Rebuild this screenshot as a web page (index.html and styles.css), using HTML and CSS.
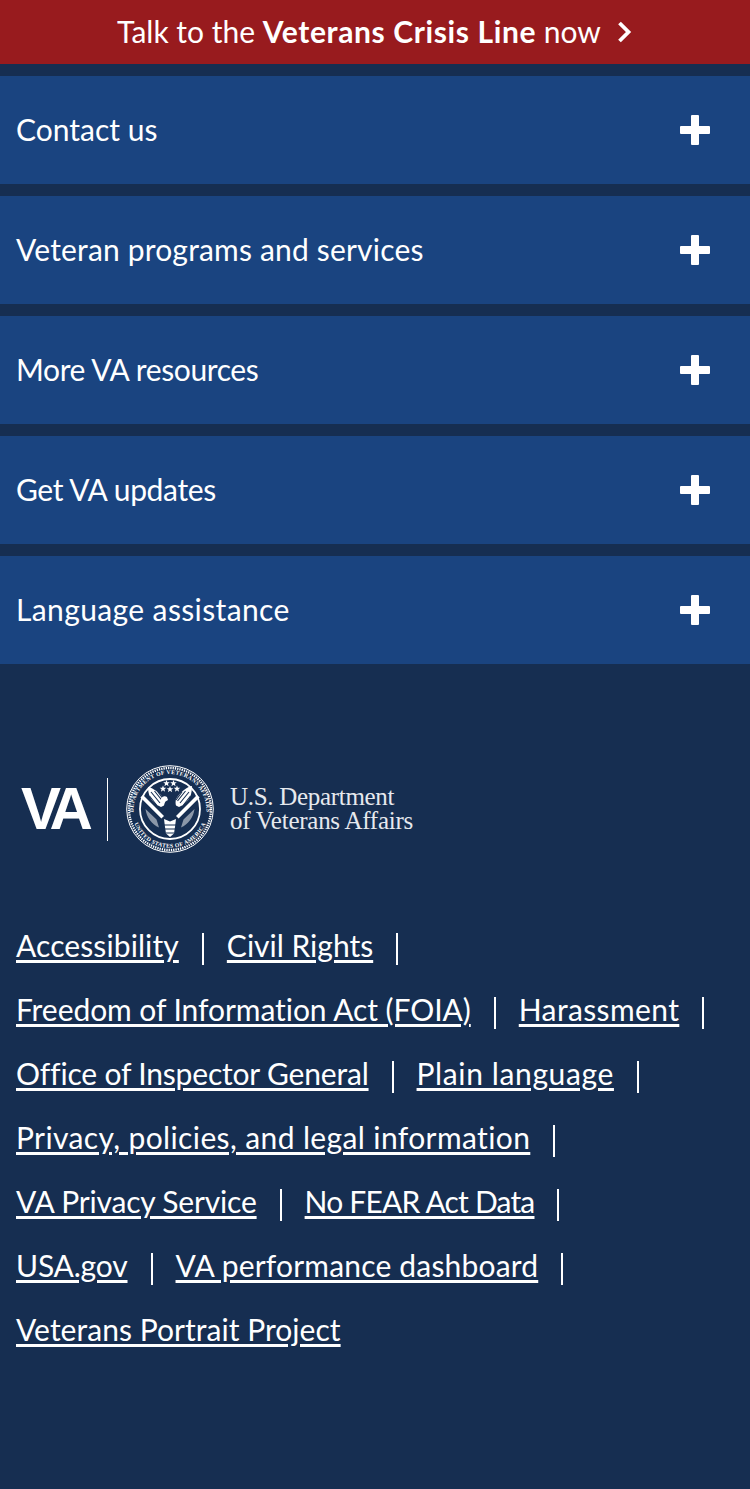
FILE: index.html
```html
<!DOCTYPE html>
<html lang="en">
<head>
<meta charset="utf-8">
<title>VA footer</title>
<link rel="stylesheet" href="styles.css">
</head>
<body>
<a class="crisis" href="#">
  <span>Talk to the <strong>Veterans Crisis Line</strong> now</span>
  <svg class="chevron" width="16" height="24" viewBox="0 0 16 24"><path d="M2.500 3 11.500 12 2.500 21" fill="none" stroke="#fff" stroke-width="3.800"/></svg>
</a>
<div class="accordions">
  <div class="acc"><span>Contact us</span><i class="plus"></i></div>
  <div class="acc"><span class="loose-s">Veteran programs and services</span><i class="plus"></i></div>
  <div class="acc"><span class="tight-s">More VA resources</span><i class="plus"></i></div>
  <div class="acc"><span class="tight-s">Get VA updates</span><i class="plus"></i></div>
  <div class="acc"><span class="loose-m">Language assistance</span><i class="plus"></i></div>
</div>
<div class="logo">
  <span class="va">VA</span>
  <span class="rule"></span>
  <svg class="seal" width="88" height="88" viewBox="0 0 88 88">
    <defs>
      <path id="arcTop" d="M8.500 54A36.500 36.500 0 1 1 79.500 54"/>
      <path id="arcBottom" d="M6.500 53A38.500 38.500 0 0 0 81.500 53"/>
    </defs>
    <circle cx="44" cy="44" r="43.300" fill="none" stroke="#fff" stroke-width="1"/>
    <circle cx="44" cy="44" r="41" fill="none" stroke="#fff" stroke-width="2.400" stroke-dasharray="1.300 1"/>
    <text class="seal-text"><textPath href="#arcTop" startOffset="50%" text-anchor="middle">DEPARTMENT OF VETERANS AFFAIRS</textPath></text>
    <text class="seal-text"><textPath href="#arcBottom" startOffset="50%" text-anchor="middle">UNITED STATES OF AMERICA</textPath></text>
    <circle cx="44" cy="44" r="30" fill="none" stroke="#fff" stroke-width="1.800"/>
    <g fill="#fff">
      <path d="M40.500 15l.9 2.300h2.400l-1.900 1.500.7 2.400-2.100-1.400-2.100 1.400.7-2.400-1.900-1.500h2.400zM47.500 15l.9 2.300h2.400l-1.900 1.500.7 2.400-2.100-1.400-2.100 1.400.7-2.400-1.900-1.500h2.400zM37 20.500l.9 2.300h2.400l-1.900 1.500.7 2.400-2.100-1.400-2.100 1.400.7-2.400-1.900-1.500h2.400zM44 21l.9 2.300h2.400l-1.900 1.500.7 2.400-2.100-1.400-2.100 1.400.7-2.400-1.900-1.500h2.400zM51 20.500l.9 2.300h2.400l-1.900 1.500.7 2.400-2.100-1.400-2.100 1.400.7-2.400-1.900-1.500h2.400z"/>
      <path d="M22 22c5 1 11 5 16 12l1 6-4 2c-5-2-9-6-11-10-1.500-3-2-7-2-10z"/>
      <path d="M66 21c-5 1-11 5-16 13l-1 6 4 2c5-2 9-6 11-10 1.500-3 2-8 2-11z"/>
      <path d="M17 30l21 21-2.600 2.600-21-21zM71 30 50 51l2.600 2.600 21-21z"/>
      <path d="M19.500 44l11 10.500 2.500 8c-7-3-12.500-10-13.500-18.500zM68.500 44 57.500 54.500l-2.500 8c7-3 12.500-10 13.500-18.500z" opacity=".5"/>
      <path d="M38 54l6 2.500 6-2.500-1 8-1 6.500-4 3.500-4-3.500-1-6.500z"/>
    </g>
    <g fill="none" stroke="#162e51">
      <path d="M25 27l9 11M28.500 26l8 10M32 27l6 8M23.500 31l7 9" stroke-width="1.100"/>
      <path d="M63 27l-9 11M59.500 26l-8 10M56 27l-6 8M64.500 31l-7 9" stroke-width="1.100"/>
      <path d="M38 60h12M39 64h10M40 68h8" stroke-width="1"/>
    </g>
    <path d="M39 36c1.500-2 3.500-3 5-3s3.500 1 5 3l1 5-2 8-4 4-4-4-2-8z" fill="#162e51"/>
    <path d="M35.500 33c1.500-2 4-2.500 5.500-1l1 3-2.500 1.500-1.500 2.500-1.500-2.500-2.500 0z" fill="#fff"/>
  </svg>
  <span class="dept"><span>U.S. Department</span><span class="dept-low">of Veterans Affairs</span></span>
</div>
<nav class="links">
  <div class="row"><a class="loose-xs" href="#">Accessibility</a><i class="sep"></i><a href="#">Civil Rights</a><i class="sep"></i></div>
  <div class="row"><a class="tight-xxs" href="#">Freedom of Information Act (FOIA)</a><i class="sep"></i><a class="loose-m" href="#">Harassment</a><i class="sep"></i></div>
  <div class="row"><a class="tight-xs" href="#">Office of Inspector General</a><i class="sep"></i><a class="loose-l" href="#">Plain language</a><i class="sep"></i></div>
  <div class="row"><a class="loose-m" href="#">Privacy, policies, and legal information</a><i class="sep"></i></div>
  <div class="row"><a class="tight-xs" href="#">VA Privacy Service</a><i class="sep"></i><a class="tight-l" href="#">No FEAR Act Data</a><i class="sep"></i></div>
  <div class="row"><a class="tight-xs" href="#">USA.gov</a><i class="sep"></i><a class="loose-s" href="#">VA performance dashboard</a><i class="sep"></i></div>
  <div class="row"><a class="loose-xxs" href="#">Veterans Portrait Project</a></div>
</nav>
</body>
</html>
```
FILE: styles.css
```css
* { box-sizing: border-box; }
html, body { margin: 0; }
body {
  height: 1489px;
  background: #162e51;
  color: #fff;
  font-family: Lato, sans-serif;
  font-size: 30px;
  font-variant-ligatures: none;
  overflow: hidden;
}
.tight-l { letter-spacing: -.8px; }
.tight-s { letter-spacing: -.38px; }
.tight-xs { letter-spacing: -.18px; }
.tight-xxs { letter-spacing: -.06px; }
.loose-xxs { letter-spacing: .04px; }
.loose-xs { letter-spacing: .1px; }
.loose-s { letter-spacing: .18px; }
.loose-m { letter-spacing: .38px; }
.loose-l { letter-spacing: .62px; }
.crisis {
  display: flex;
  align-items: center;
  justify-content: center;
  gap: 16px;
  height: 64px;
  padding-bottom: 2px;
  background: #981b1e;
  color: #fff;
  text-decoration: none;
}
.crisis strong { letter-spacing: .62px; }
.chevron { display: block; margin-top: 2px; }
.accordions {
  display: flex;
  flex-direction: column;
  gap: 12px;
  padding-top: 12px;
}
.acc {
  display: flex;
  align-items: center;
  justify-content: space-between;
  height: 108px;
  padding: 0 40px 2px 16px;
  background: #1a4480;
}
.plus {
  position: relative;
  width: 30px;
  height: 30px;
  margin-top: 2px;
}
.plus::before, .plus::after {
  content: "";
  position: absolute;
  background: #fff;
  border-radius: 1px;
}
.plus::before { left: 0; right: 0; top: 11px; height: 8px; }
.plus::after { top: 0; bottom: 0; left: 11px; width: 8px; }
.logo {
  display: flex;
  align-items: center;
  height: 88px;
  margin-top: 101px;
  padding-left: 21px;
}
.va {
  width: 86px;
  font-family: "Liberation Sans", sans-serif;
  font-weight: 700;
  font-size: 60px;
  line-height: 1;
  letter-spacing: -7px;
}
.rule {
  width: 1px;
  height: 63px;
  background: #fff;
}
.seal { margin-left: 18px; }
.seal-text {
  font-family: "Liberation Serif", serif;
  font-size: 5.800px;
  font-weight: 700;
  letter-spacing: .3px;
  fill: #fff;
}
.dept {
  display: flex;
  flex-direction: column;
  margin-left: 16px;
  font-family: "Liberation Serif", serif;
  font-size: 25px;
  line-height: 24px;
  letter-spacing: -.3px;
  color: #e6e9ee;
}
.dept-low { letter-spacing: -.26px; }
.links { padding: 62px 16px 0; }
.row {
  display: flex;
  align-items: center;
  height: 64px;
  padding-bottom: 4px;
}
.row a {
  color: #fff;
  text-decoration: underline;
  text-decoration-thickness: 3px;
  text-underline-offset: 3px;
}
.sep {
  width: 2px;
  height: 32px;
  margin: 8px 23px 0;
  background: #fff;
}
```
